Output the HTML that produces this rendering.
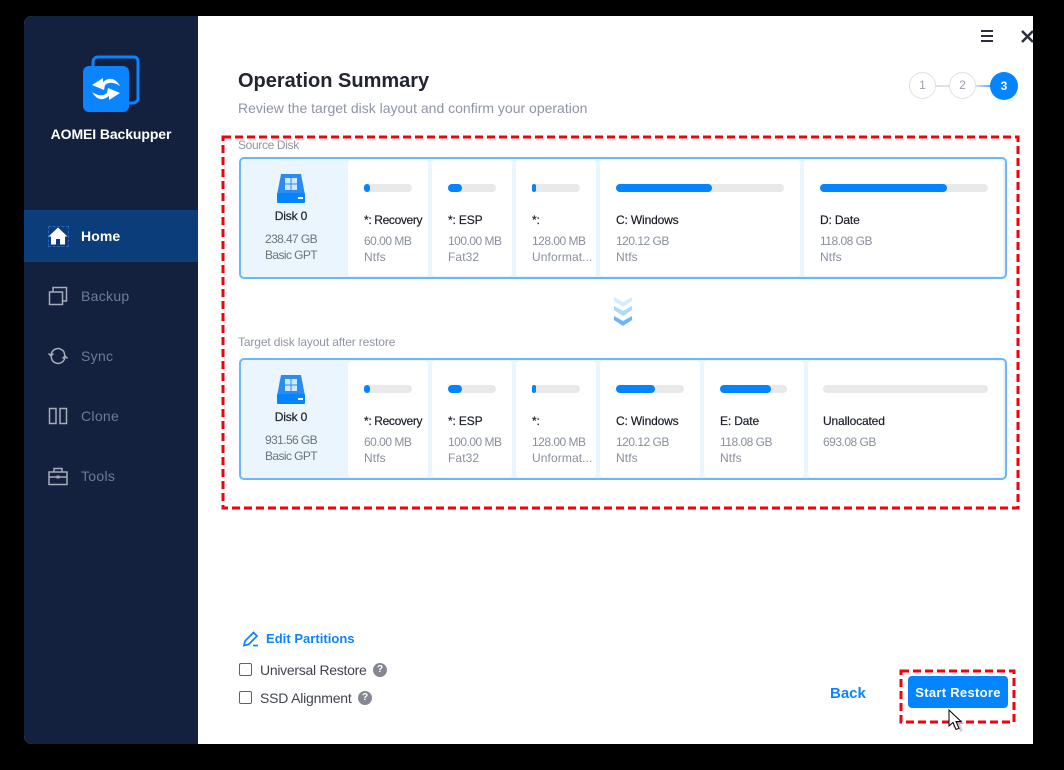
<!DOCTYPE html>
<html><head><meta charset="utf-8"><style>
html,body{margin:0;padding:0;background:#000;width:1064px;height:770px;overflow:hidden}
body{position:relative;font-family:"Liberation Sans",sans-serif}
.a{position:absolute}
.t{position:absolute;white-space:nowrap;line-height:16px;font-size:12px}
.n{color:#1c1f2b;letter-spacing:-.15px;-webkit-text-stroke:.2px #1c1f2b}
.g{color:#8a8f9e;letter-spacing:.1px}
.d{color:#8a8f9e;letter-spacing:-.5px}
.c{text-align:center;width:108px;left:237px}
.i{color:#6e7280;letter-spacing:-.6px}
.nav{position:absolute;left:81px;font-size:14px;line-height:20px;color:#6f7a96;letter-spacing:.3px}
.card{position:absolute;background:#fff;border-radius:3px}
.bar{position:absolute;height:8px;background:#e9e9e9;border-radius:4px}
.fill{position:absolute;height:8px;background:#0484fe;border-radius:4px;left:0;top:0}
.box{position:absolute;left:239px;width:764px;background:#eaf5fe;border:2px solid #6cb6fb;border-radius:5px}
.q{position:absolute;width:14px;height:14px;border-radius:50%;background:#858893;color:#fff;font-size:10px;font-weight:bold;line-height:14px;text-align:center}
.cb{position:absolute;left:239px;width:11px;height:11px;border:1.5px solid #5d6070;border-radius:2px;background:#fff}
</style></head><body>

<div class="a" style="left:24px;top:16px;width:1009px;height:728px;background:#fff;border-radius:8px 0 0 8px;overflow:hidden">
  <div class="a" style="left:0;top:0;width:174px;height:728px;background:#13213f"></div>
  <div class="a" style="left:0;top:194px;width:174px;height:52px;background:#0a3d7a"></div>
</div>

<svg class="a" style="left:80px;top:52px" width="64" height="64" viewBox="0 0 64 64">
  <path d="M13 16V10a5 5 0 0 1 5-5h36a4 4 0 0 1 4 4v37a5 5 0 0 1-5 5h-5" fill="none" stroke="#0a84ff" stroke-width="3"/>
  <rect x="3" y="14" width="46" height="46" rx="6" fill="#0a84ff"/>
  <path d="M12 33L23 26L23 30Q33 22 40 34Q31 28 25 33L24 38Z" fill="#fff"/>
  <path d="M40 41L29 48L29 44Q19 52 12 40Q21 46 27 41L28 36Z" fill="#fff"/>
</svg>
<div class="t" style="left:24px;width:174px;text-align:center;top:126px;font-size:14px;font-weight:bold;color:#fff;letter-spacing:-.1px">AOMEI Backupper</div>

<!-- nav -->
<div class="a" style="left:48px;top:226px;width:19px;height:19px;border:1px dashed #2a63b5"></div>
<svg class="a" style="left:48px;top:226px" width="20" height="20" viewBox="0 0 20 20"><path d="M10 1.500L.5 10.500H3v8h5v-5.500h4v5.500h5v-8h2.500z" fill="#fff"/></svg>
<div class="nav" style="top:226px;color:#fff;font-weight:bold;letter-spacing:.1px">Home</div>

<svg class="a" style="left:48px;top:286px" width="20" height="20" viewBox="0 0 20 20" fill="none" stroke="#a7acb9" stroke-width="1.500"><rect x="1.500" y="6" width="13" height="12.500"/><path d="M5 6V1.500h13.500V15H14.500"/></svg>
<div class="nav" style="top:286px">Backup</div>

<svg class="a" style="left:48px;top:346px" width="20" height="20" viewBox="0 0 20 20" fill="none" stroke="#a7acb9" stroke-width="1.500"><path d="M3 9a7 7 0 0 1 13-3l1 4"/><path d="M17 11a7 7 0 0 1-13 3l-1-4"/><path d="M.5 7.500L3 10l2.500-2.500M14.500 12.500L17 10l2.500 2.500"/></svg>
<div class="nav" style="top:346px">Sync</div>

<svg class="a" style="left:48px;top:406px" width="20" height="20" viewBox="0 0 20 20" fill="none" stroke="#a7acb9" stroke-width="1.500"><rect x="1.500" y="2.500" width="6.500" height="15"/><rect x="12" y="2.500" width="6.500" height="15"/></svg>
<div class="nav" style="top:406px">Clone</div>

<svg class="a" style="left:48px;top:466px" width="20" height="20" viewBox="0 0 20 20" fill="none" stroke="#a7acb9" stroke-width="1.500"><rect x="1" y="6" width="18" height="12.500"/><path d="M6 6V2.500h8V6M1 11h18"/><rect x="8.500" y="9.500" width="3" height="3" fill="#a7acb9" stroke="none"/></svg>
<div class="nav" style="top:466px">Tools</div>

<!-- window controls -->
<div class="a" style="left:981px;top:30px;width:12px;height:2px;background:#2b2f3c"></div>
<div class="a" style="left:981px;top:35px;width:12px;height:2px;background:#2b2f3c"></div>
<div class="a" style="left:981px;top:40px;width:12px;height:2px;background:#2b2f3c"></div>
<svg class="a" style="left:1021px;top:30px" width="12" height="13" viewBox="0 0 12 13"><path d="M1 1l11 11M12 1L1 12" stroke="#2b2f3c" stroke-width="2.500" fill="none"/></svg>

<!-- heading -->
<div class="t" style="left:238px;top:69px;line-height:24px;font-size:20px;font-weight:bold;color:#22252f;letter-spacing:0">Operation Summary</div>
<div class="t" style="left:238px;top:100px;font-size:14px;color:#8f94a6;letter-spacing:0">Review the target disk layout and confirm your operation</div>

<!-- steps -->
<div class="a" style="left:936px;top:85px;width:14px;height:2px;background:#dde1ea"></div>
<div class="a" style="left:976px;top:85px;width:16px;height:2px;background:linear-gradient(90deg,#dde1ea,#4aa5fd)"></div>
<div class="a" style="left:909px;top:72px;width:25px;height:25px;border:1.500px solid #dde1ea;border-radius:50%;text-align:center;line-height:25px;font-size:12px;color:#9a9eb0">1</div>
<div class="a" style="left:949px;top:72px;width:25px;height:25px;border:1.500px solid #dde1ea;border-radius:50%;text-align:center;line-height:25px;font-size:12px;color:#9a9eb0">2</div>
<div class="a" style="left:990px;top:72px;width:28px;height:28px;background:#0484fe;border-radius:50%;text-align:center;line-height:28px;font-size:12px;font-weight:bold;color:#fff">3</div>

<!-- source disk -->
<div class="t" style="left:238px;top:137px;font-size:12px;color:#8f94a6;letter-spacing:-.35px">Source Disk</div>
<div class="box" style="top:157px;height:118px"></div>
<div class="card" style="left:348px;top:160px;width:80px;height:116px"></div>
<div class="card" style="left:432px;top:160px;width:80px;height:116px"></div>
<div class="card" style="left:516px;top:160px;width:80px;height:116px"></div>
<div class="card" style="left:600px;top:160px;width:200px;height:116px"></div>
<div class="card" style="left:804px;top:160px;width:199px;height:116px;border-radius:3px 3px 4px 3px"></div>

<svg class="a" style="left:277px;top:174px" width="28" height="30" viewBox="0 0 28 30"><path d="M4 0h20l4 21H0z" fill="#2a8bf0"/><rect y="19" width="28" height="10" rx="1" fill="#0484fe"/><rect x="8" y="4" width="12" height="12" fill="#cfe8ff"/><path d="M14 4v12M8 10h12" stroke="#2a8bf0" stroke-width="1"/><rect x="21" y="23" width="5" height="2" fill="#fff"/></svg>
<div class="t c n" style="top:208px">Disk 0</div>
<div class="t c i" style="top:231px">238.47 GB</div>
<div class="t c i" style="top:247px">Basic GPT</div>

<div class="bar" style="left:364px;top:184px;width:48px"><div class="fill" style="width:6px"></div></div>
<div class="t n" style="left:364px;top:212px;letter-spacing:-.35px">*: Recovery</div>
<div class="t d" style="left:364px;top:233px">60.00 MB</div>
<div class="t g" style="left:364px;top:249px">Ntfs</div>

<div class="bar" style="left:448px;top:184px;width:48px"><div class="fill" style="width:14px"></div></div>
<div class="t n" style="left:448px;top:212px">*: ESP</div>
<div class="t d" style="left:448px;top:233px">100.00 MB</div>
<div class="t g" style="left:448px;top:249px">Fat32</div>

<div class="bar" style="left:532px;top:184px;width:48px"><div class="fill" style="width:4px"></div></div>
<div class="t n" style="left:532px;top:212px">*:</div>
<div class="t d" style="left:532px;top:233px">128.00 MB</div>
<div class="t g" style="left:532px;top:249px">Unformat...</div>

<div class="bar" style="left:616px;top:184px;width:168px"><div class="fill" style="width:96px"></div></div>
<div class="t n" style="left:616px;top:212px">C: Windows</div>
<div class="t d" style="left:616px;top:233px">120.12 GB</div>
<div class="t g" style="left:616px;top:249px">Ntfs</div>

<div class="bar" style="left:820px;top:184px;width:168px"><div class="fill" style="width:127px"></div></div>
<div class="t n" style="left:820px;top:212px">D: Date</div>
<div class="t d" style="left:820px;top:233px">118.08 GB</div>
<div class="t g" style="left:820px;top:249px">Ntfs</div>

<!-- arrows -->
<svg class="a" style="left:613px;top:296px" width="20" height="32" viewBox="0 0 20 32"><path d="M1 1l9 5 9-5v4l-9 6-9-6z" fill="#d3edfd"/><path d="M1 10l9 5 9-5v4l-9 6-9-6z" fill="#a9dafc"/><path d="M1 20l9 5 9-5v4l-9 6-9-6z" fill="#6ab6fb"/></svg>

<!-- target -->
<div class="t" style="left:238px;top:334px;font-size:12px;color:#8f94a6;letter-spacing:-.13px">Target disk layout after restore</div>
<div class="box" style="top:358px;height:118px"></div>
<div class="card" style="left:348px;top:361px;width:80px;height:116px"></div>
<div class="card" style="left:432px;top:361px;width:80px;height:116px"></div>
<div class="card" style="left:516px;top:361px;width:80px;height:116px"></div>
<div class="card" style="left:600px;top:361px;width:100px;height:116px"></div>
<div class="card" style="left:704px;top:361px;width:100px;height:116px"></div>
<div class="card" style="left:808px;top:361px;width:195px;height:116px"></div>

<svg class="a" style="left:277px;top:375px" width="28" height="30" viewBox="0 0 28 30"><path d="M4 0h20l4 21H0z" fill="#2a8bf0"/><rect y="19" width="28" height="10" rx="1" fill="#0484fe"/><rect x="8" y="4" width="12" height="12" fill="#cfe8ff"/><path d="M14 4v12M8 10h12" stroke="#2a8bf0" stroke-width="1"/><rect x="21" y="23" width="5" height="2" fill="#fff"/></svg>
<div class="t c n" style="top:409px">Disk 0</div>
<div class="t c i" style="top:432px">931.56 GB</div>
<div class="t c i" style="top:448px">Basic GPT</div>

<div class="bar" style="left:364px;top:385px;width:48px"><div class="fill" style="width:6px"></div></div>
<div class="t n" style="left:364px;top:413px;letter-spacing:-.35px">*: Recovery</div>
<div class="t d" style="left:364px;top:434px">60.00 MB</div>
<div class="t g" style="left:364px;top:450px">Ntfs</div>

<div class="bar" style="left:448px;top:385px;width:48px"><div class="fill" style="width:14px"></div></div>
<div class="t n" style="left:448px;top:413px">*: ESP</div>
<div class="t d" style="left:448px;top:434px">100.00 MB</div>
<div class="t g" style="left:448px;top:450px">Fat32</div>

<div class="bar" style="left:532px;top:385px;width:48px"><div class="fill" style="width:4px"></div></div>
<div class="t n" style="left:532px;top:413px">*:</div>
<div class="t d" style="left:532px;top:434px">128.00 MB</div>
<div class="t g" style="left:532px;top:450px">Unformat...</div>

<div class="bar" style="left:616px;top:385px;width:68px"><div class="fill" style="width:39px"></div></div>
<div class="t n" style="left:616px;top:413px">C: Windows</div>
<div class="t d" style="left:616px;top:434px">120.12 GB</div>
<div class="t g" style="left:616px;top:450px">Ntfs</div>

<div class="bar" style="left:720px;top:385px;width:67px"><div class="fill" style="width:51px"></div></div>
<div class="t n" style="left:720px;top:413px">E: Date</div>
<div class="t d" style="left:720px;top:434px">118.08 GB</div>
<div class="t g" style="left:720px;top:450px">Ntfs</div>

<div class="bar" style="left:823px;top:385px;width:165px"></div>
<div class="t n" style="left:823px;top:413px">Unallocated</div>
<div class="t d" style="left:823px;top:434px">693.08 GB</div>

<!-- bottom -->
<svg class="a" style="left:243px;top:631px" width="16" height="16" viewBox="0 0 16 16" fill="none" stroke="#0a84ff" stroke-width="1.700"><path d="M1 14.500l1-4.500L10.500 1.500l3.500 3.500L5.500 13.500z"/><path d="M10 14.500h5"/></svg>
<div class="t" style="left:266px;top:631px;font-size:13px;font-weight:bold;color:#0a84ff;letter-spacing:.03px">Edit Partitions</div>

<div class="cb" style="top:663px"></div>
<div class="t" style="left:260px;top:662px;font-size:14px;color:#41444f;letter-spacing:-.28px">Universal Restore</div>
<div class="q" style="left:373px;top:663px">?</div>
<div class="cb" style="top:691px"></div>
<div class="t" style="left:260px;top:690px;font-size:14px;color:#41444f;letter-spacing:-.2px">SSD Alignment</div>
<div class="q" style="left:358px;top:691px">?</div>

<div class="t" style="left:830px;top:685px;font-size:15px;font-weight:bold;color:#0a84ff;letter-spacing:0;line-height:18px">Back</div>
<div class="a" style="left:908px;top:676px;width:100px;height:32px;background:#0484fe;border-radius:4px;color:#fff;font-size:13px;font-weight:bold;text-align:center;line-height:34px;letter-spacing:.3px">Start Restore</div>

<!-- red dashes -->
<svg class="a" style="left:0;top:0" width="1064" height="770" viewBox="0 0 1064 770" fill="none" stroke="#f5000a" stroke-width="3" stroke-dasharray="8 4">
  <rect x="223" y="137" width="795" height="371"/>
  <rect x="901" y="671" width="113" height="51"/>
</svg>

<!-- cursor -->
<svg class="a" style="left:948px;top:709px" width="18" height="25" viewBox="0 0 18 25"><path d="M3 3v15l4-3 3 7 3-1-3-7h5z" fill="#b9bcc6" opacity=".7" transform="translate(2,1)"/><path d="M1 1v16l4-3.500 3 7 3-1.200-3-6.800h5z" fill="#fff" stroke="#000" stroke-width="1"/></svg>

</body></html>
